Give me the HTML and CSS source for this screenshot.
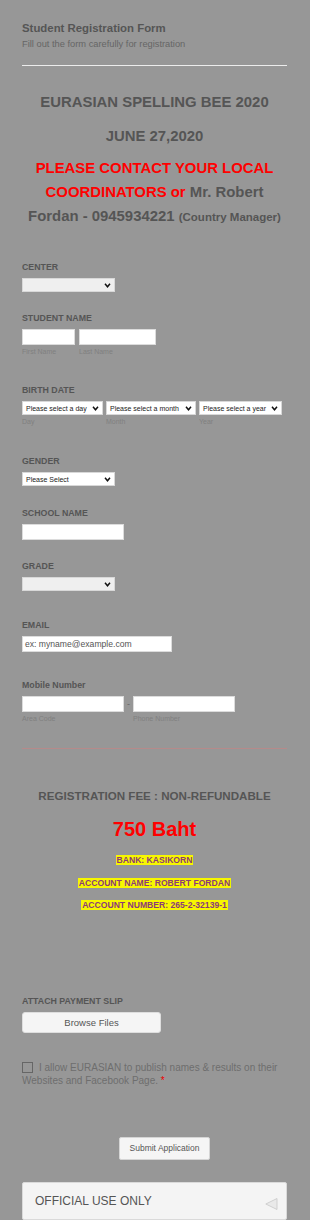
FILE: index.html
```html
<!DOCTYPE html>
<html>
<head>
<meta charset="utf-8">
<link rel="stylesheet" href="styles.css">
</head>
<body>
<div class="page">
  <header class="head">
    <h1 class="title">Student Registration Form</h1>
    <p class="subtitle">Fill out the form carefully for registration</p>
  </header>
  <div class="hr"></div>

  <div class="intro">
    <p class="big">EURASIAN SPELLING BEE 2020</p>
    <p class="big date">JUNE 27,2020</p>
    <p class="contact"><span class="red">PLEASE CONTACT YOUR LOCAL COORDINATORS or</span> Mr. Robert Fordan - 0945934221 <span class="small">(Country Manager)</span></p>
  </div>

  <div class="field f-center">
    <div class="label">CENTER</div>
    <div class="select w93"><span></span><svg class="chev" viewBox="0 0 8 6" width="7" height="5"><path d="M1 1 L4 4.5 L7 1" fill="none" stroke="#111" stroke-width="1.8"/></svg></div>
  </div>

  <div class="field f-name">
    <div class="label">STUDENT NAME</div>
    <div class="row gap4">
      <div class="col"><div class="input" style="width:53px"></div><div class="sub">First Name</div></div>
      <div class="col"><div class="input" style="width:77px"></div><div class="sub">Last Name</div></div>
    </div>
  </div>

  <div class="field f-birth">
    <div class="label">BIRTH DATE</div>
    <div class="row gap3">
      <div class="col"><div class="select small-sel white" style="width:81px"><span>Please select a day</span><svg class="chev" viewBox="0 0 8 6" width="7" height="5"><path d="M1 1 L4 4.5 L7 1" fill="none" stroke="#111" stroke-width="1.8"/></svg></div><div class="sub">Day</div></div>
      <div class="col"><div class="select small-sel white" style="width:90px"><span>Please select a month</span><svg class="chev" viewBox="0 0 8 6" width="7" height="5"><path d="M1 1 L4 4.5 L7 1" fill="none" stroke="#111" stroke-width="1.8"/></svg></div><div class="sub">Month</div></div>
      <div class="col"><div class="select small-sel white" style="width:83px"><span>Please select a year</span><svg class="chev" viewBox="0 0 8 6" width="7" height="5"><path d="M1 1 L4 4.5 L7 1" fill="none" stroke="#111" stroke-width="1.8"/></svg></div><div class="sub">Year</div></div>
    </div>
  </div>

  <div class="field f-gender">
    <div class="label">GENDER</div>
    <div class="select w93 white small-sel"><span>Please Select</span><svg class="chev" viewBox="0 0 8 6" width="7" height="5"><path d="M1 1 L4 4.5 L7 1" fill="none" stroke="#111" stroke-width="1.8"/></svg></div>
  </div>

  <div class="field f-school">
    <div class="label">SCHOOL NAME</div>
    <div class="input" style="width:102px"></div>
  </div>

  <div class="field f-grade">
    <div class="label">GRADE</div>
    <div class="select w93"><span></span><svg class="chev" viewBox="0 0 8 6" width="7" height="5"><path d="M1 1 L4 4.5 L7 1" fill="none" stroke="#111" stroke-width="1.8"/></svg></div>
  </div>

  <div class="field f-email">
    <div class="label">EMAIL</div>
    <div class="input email" style="width:150px">ex: myname@example.com</div>
  </div>

  <div class="field f-mobile">
    <div class="label">Mobile Number</div>
    <div class="row">
      <div class="col"><div class="input" style="width:102px"></div><div class="sub">Area Code</div></div>
      <div class="dash">-</div>
      <div class="col"><div class="input" style="width:102px"></div><div class="sub">Phone Number</div></div>
    </div>
  </div>

  <div class="hr red-line"></div>

  <div class="fee">
    <p class="fee-title">REGISTRATION FEE : NON-REFUNDABLE</p>
    <p class="price">750 Baht</p>
    <p class="hl first"><span>BANK: KASIKORN</span></p>
    <p class="hl"><span>ACCOUNT NAME: ROBERT FORDAN</span></p>
    <p class="hl last"><span>ACCOUNT NUMBER: 265-2-32139-1</span></p>
  </div>

  <div class="field f-attach">
    <div class="label">ATTACH PAYMENT SLIP</div>
    <div class="browse">Browse Files</div>
  </div>

  <p class="consent"><span class="box"></span>I allow EURASIAN to publish names &amp; results on their Websites and Facebook Page. <span class="star">*</span></p>

  <div class="submit-row"><div class="submit">Submit Application</div></div>

  <div class="official">
    <span>OFFICIAL USE ONLY</span>
    <svg width="13" height="12" viewBox="0 0 13 12"><path d="M12 0.5 L12 11.5 L0.8 6 Z" fill="#e9e9e9" stroke="#cfcfcf" stroke-width="1"/></svg>
  </div>
</div>
</body>
</html>
```

FILE: styles.css
```css
* { box-sizing: border-box; }
html, body { margin: 0; padding: 0; }
body {
  background: #979797;
  font-family: "Liberation Sans", Arial, sans-serif;
  color: #555;
}
p { margin: 0; }
.page {
  padding: 21px 23px 0 22px;
  width: 310px;
  height: 1220px;
  overflow: hidden;
}
.title {
  margin: 0;
  font-size: 11.4px;
  line-height: 14px;
  font-weight: bold;
  color: #555;
}
.subtitle {
  margin-top: 3px;
  font-size: 9.3px;
  line-height: 12px;
  color: #666;
}
.hr {
  height: 1px;
  background: #ececec;
  margin-top: 15px;
}
.intro { text-align: center; }
.big {
  font-size: 14.9px;
  line-height: 18px;
  font-weight: bold;
  color: #555;
  margin-top: 27px;
}
.big.date { margin-top: 16px; }
.contact {
  margin-top: 11px;
  font-size: 14.9px;
  line-height: 24px;
  font-weight: bold;
  color: #555;
}
.red { color: #ff0000; }
.contact .small { font-size: 11.5px; }

.field { display: flex; flex-direction: column; align-items: flex-start; }
.label {
  font-size: 8.8px;
  line-height: 12px;
  font-weight: bold;
  color: #555;
  margin-bottom: 5px;
}
.f-center { margin-top: 32px; }
.f-name { margin-top: 20px; }
.f-birth { margin-top: 28px; }
.f-gender { margin-top: 29px; }
.f-school { margin-top: 21px; }
.f-grade { margin-top: 20px; }
.f-email { margin-top: 28px; }
.f-mobile { margin-top: 27px; }

.row { display: flex; align-items: flex-start; }
.gap4 { gap: 4px; }
.gap3 { gap: 3px; }
.col { display: flex; flex-direction: column; }
.select {
  height: 14px;
  background: #efefef;
  border: 1px solid #d8d8d8;
  display: flex;
  align-items: center;
  justify-content: space-between;
  padding: 0 3px 0 3px;
}
.select.white { background: #fff; }
.w93 { width: 93px; }
.small-sel span {
  font-size: 7px;
  color: #222;
  white-space: nowrap;
}
.chev { flex: none; }
.input {
  height: 16px;
  background: #fff;
  border: 1px solid #dcdcdc;
}
.input.email {
  font-size: 8.6px;
  line-height: 14px;
  color: #555;
  padding-left: 2px;
}
.sub {
  font-size: 7px;
  line-height: 9px;
  color: #808080;
  margin-top: 2px;
}
.dash {
  width: 9px;
  text-align: center;
  font-size: 9px;
  line-height: 16px;
  color: #666;
}
.red-line {
  background: #b68a8a;
  margin-top: 25px;
}
.fee { text-align: center; }
.fee-title {
  margin-top: 39px;
  font-size: 11.6px;
  line-height: 15px;
  font-weight: bold;
  color: #555;
}
.price {
  margin-top: 14px;
  font-size: 20px;
  line-height: 24px;
  font-weight: bold;
  color: #ff0000;
}
.hl {
  font-size: 8.6px;
  line-height: 12px;
  font-weight: bold;
  color: #8b3a78;
  margin-top: 11px;
}
.hl.first { margin-top: 13px; }
.hl.last { margin-top: 10px; }
.hl span { background: #f7f700; padding: 0 1px; }

.f-attach { margin-top: 84px; }
.browse {
  width: 139px;
  height: 21px;
  background: #f5f5f5;
  border: 1px solid #dedede;
  border-radius: 3px;
  font-size: 9.5px;
  line-height: 19px;
  text-align: center;
  color: #555;
}
.consent {
  margin-top: 29px;
  font-size: 10px;
  line-height: 12.5px;
  color: #6e6e6e;
}
.consent .box {
  display: inline-block;
  width: 11px;
  height: 11px;
  border: 1px solid #666;
  vertical-align: -2px;
  margin-right: 6px;
}
.star { color: #e00; }
.submit-row {
  margin-top: 50px;
  padding-left: 97px;
}
.submit {
  width: 91px;
  height: 23px;
  background: #f5f5f5;
  border: 1px solid #d5d5d5;
  border-radius: 2px;
  font-size: 8.5px;
  line-height: 21px;
  text-align: center;
  color: #555;
}
.official {
  margin-top: 22px;
  height: 38px;
  background: #f4f4f4;
  border: 1px solid #dadada;
  border-radius: 2px;
  display: flex;
  align-items: center;
  justify-content: space-between;
  padding: 0 8px 0 12px;
}
.official span {
  font-size: 12px;
  color: #555;
}
.official svg { margin-top: 5px; }
```
